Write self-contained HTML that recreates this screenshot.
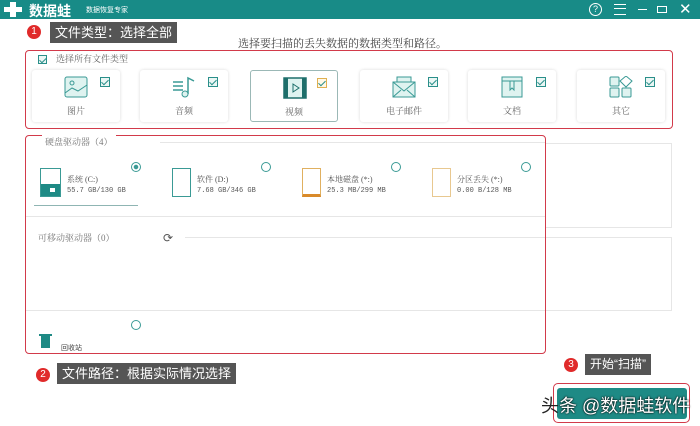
<!DOCTYPE html>
<html><head><meta charset="utf-8"><style>
*{margin:0;padding:0;box-sizing:border-box}
body{width:700px;height:426px;background:#fff;position:relative;overflow:hidden;font-family:"Liberation Sans","Noto Sans CJK SC",sans-serif;color:#555}
.a{position:absolute}
.serif{font-family:"Liberation Serif","Noto Serif CJK SC",serif}
.card{position:absolute;top:70px;width:88px;height:52px;background:#fff;border-radius:3px;box-shadow:0 0 3px rgba(0,0,0,.15)}
.card .lbl{position:absolute;top:34px;width:100%;text-align:center;font-size:9px;color:#666}
.cb{position:absolute;top:7px;right:10px;width:10px;height:10px;border:1px solid #2a8f8a;background:#eaf6f4}
.cb:after{content:"";position:absolute;left:2px;top:0px;width:3px;height:6px;border:solid #2a8f8a;border-width:0 1.5px 1.5px 0;transform:rotate(45deg)}
.card svg{position:absolute;left:32px;top:6px}
.red{border:1.5px solid #d23a4a;border-radius:4px}
.tag{background:#555;color:#fff;font-size:13px;line-height:21px;padding:0 5px}
.num{width:14px;height:14px;border-radius:50%;background:#e02a2a;color:#fff;font-size:10px;text-align:center;line-height:14px}
.radio{width:10px;height:10px;border:1px solid #3a9a95;border-radius:50%}
.dt{font-size:8px;color:#555}
</style></head><body>
<div class="a" style="left:0;top:0;width:700px;height:19px;background:#188b87"></div>
<div class="a" style="left:4px;top:2px;width:18px;height:15px">
<div class="a" style="left:6px;top:0;width:6px;height:15px;background:#fff"></div>
<div class="a" style="left:0;top:5px;width:18px;height:5px;background:#fff"></div></div>
<div class="a" style="left:29px;top:1px;color:#fff;font-size:14px;font-weight:bold">数据蛙</div>
<div class="a" style="left:86px;top:5px;color:#fff;font-size:7px">数据恢复专家</div>
<div class="a" style="left:589px;top:3px;width:13px;height:13px;border:1.5px solid #fff;border-radius:50%;color:#fff;font-size:9px;text-align:center;line-height:10px">?</div>
<div class="a" style="left:614px;top:4px;width:12px;height:11px;border-top:1.5px solid #fff;border-bottom:1.5px solid #fff"><div style="margin-top:3px;border-top:1.5px solid #fff"></div></div>
<div class="a" style="left:638px;top:9px;width:9px;border-top:1.5px solid #fff"></div>
<div class="a" style="left:657px;top:6px;width:10px;height:7px;border:1.5px solid #fff"></div>
<div class="a" style="left:679px;top:0px;color:#fff;font-size:15px">✕</div>

<div class="a num" style="left:27px;top:25px">1</div>
<div class="a tag" style="left:50px;top:22px">文件类型：选择全部</div>
<div class="a serif" style="left:238px;top:35px;font-size:11px;color:#444">选择要扫描的丢失数据的数据类型和路径。</div>

<div class="a red" style="left:25px;top:50px;width:648px;height:79px"></div>
<div class="cb" style="left:38px;top:55px;right:auto;width:9px;height:9px"></div>
<div class="a serif" style="left:56px;top:52px;font-size:9px;color:#666">选择所有文件类型</div>

<div class="card" style="left:32px"><svg width="24" height="22"><rect x="1" y="1" width="22" height="20" rx="2" fill="#dff3f0" stroke="#3a9a95"/><circle cx="8" cy="7" r="2" fill="none" stroke="#3a9a95"/><path d="M1 17 L8 12 L14 15 L23 9" fill="none" stroke="#3a9a95"/></svg><div class="cb"></div><div class="lbl serif">图片</div></div>
<div class="card" style="left:140px"><svg width="24" height="22"><path d="M1 6h10M1 10h10M1 14h10" stroke="#3a9a95" stroke-width="1.5"/><path d="M16 18V2l6 3" fill="none" stroke="#3a9a95" stroke-width="1.5"/><circle cx="13" cy="18" r="3" fill="#dff3f0" stroke="#3a9a95"/></svg><div class="cb"></div><div class="lbl serif">音频</div></div>
<div class="card" style="left:250px;border:1px solid #9bb8b6;box-shadow:none"><svg width="24" height="22"><rect x="1" y="1" width="22" height="20" fill="#dff3f0" stroke="#1e6f6b" stroke-width="1.5"/><rect x="1" y="1" width="4" height="20" fill="#1e6f6b"/><rect x="19" y="1" width="4" height="20" fill="#1e6f6b"/><path d="M10 7v8l6-4z" fill="none" stroke="#1e6f6b"/></svg><div class="cb" style="border-color:#e0b050;background:#fff8e6"></div><div class="lbl serif">视频</div></div>
<div class="card" style="left:360px"><svg width="24" height="22"><rect x="5" y="1" width="14" height="6" fill="#dff3f0" stroke="#3a9a95"/><rect x="1" y="6" width="22" height="15" fill="#dff3f0" stroke="#3a9a95"/><path d="M1 6l11 9 11-9M1 21l8-7M23 21l-8-7" fill="none" stroke="#3a9a95"/></svg><div class="cb"></div><div class="lbl serif">电子邮件</div></div>
<div class="card" style="left:468px"><svg width="24" height="22"><rect x="2" y="1" width="20" height="20" fill="#dff3f0" stroke="#3a9a95"/><path d="M2 5h20M10 5v9l2-2 2 2V5" fill="none" stroke="#3a9a95"/></svg><div class="cb"></div><div class="lbl serif">文档</div></div>
<div class="card" style="left:577px"><svg width="24" height="22"><rect x="1" y="1" width="9" height="9" rx="1" fill="#dff3f0" stroke="#3a9a95"/><path d="M17 0l6 5-6 6-6-6z" fill="#fff" stroke="#3a9a95"/><rect x="1" y="12" width="9" height="9" rx="1" fill="#dff3f0" stroke="#3a9a95"/><rect x="13" y="12" width="9" height="9" rx="1" fill="#dff3f0" stroke="#3a9a95"/></svg><div class="cb"></div><div class="lbl serif">其它</div></div>

<div class="a" style="left:545px;top:143px;width:127px;height:85px;border:1px solid #e6e6e6;border-left:none"></div>
<div class="a" style="left:545px;top:237px;width:127px;height:74px;border:1px solid #e6e6e6;border-left:none"></div>
<div class="a" style="left:160px;top:142px;width:385px;border-top:1px solid #e6e6e6"></div>
<div class="a" style="left:185px;top:237px;width:360px;border-top:1px solid #e6e6e6"></div>
<div class="a" style="left:25px;top:310px;width:520px;border-top:1px solid #e6e6e6"></div>
<div class="a" style="left:25px;top:216px;width:520px;border-top:1px solid #e6e6e6"></div>

<div class="a red" style="left:25px;top:135px;width:521px;height:219px"></div>
<div class="a serif" style="left:42px;top:135px;font-size:9px;color:#777;background:#fff;padding:0 3px">硬盘驱动器（4）</div>

<div class="a" style="left:40px;top:168px;width:21px;height:29px;border:1px solid #3a9a95"><div style="position:absolute;left:0;right:0;bottom:0;height:12px;background:#1e8a85"></div><div style="position:absolute;left:9px;bottom:4px;width:5px;height:4px;background:#fff"></div></div>
<div class="a dt serif" style="left:67px;top:174px">系统 (C:)</div>
<div class="a dt" style="left:67px;top:187px;font-family:'Liberation Mono',monospace;font-size:7px">55.7 GB/130 GB</div>
<div class="a radio" style="left:131px;top:162px;background:radial-gradient(#3a9a95 35%,#fff 45%)"></div>
<div class="a" style="left:34px;top:205px;width:104px;border-top:1px solid #8fb5b3"></div>

<div class="a" style="left:172px;top:168px;width:19px;height:29px;border:1px solid #3a9a95"></div>
<div class="a dt serif" style="left:197px;top:174px">软件 (D:)</div>
<div class="a dt" style="left:197px;top:187px;font-family:'Liberation Mono',monospace;font-size:7px">7.68 GB/346 GB</div>
<div class="a radio" style="left:261px;top:162px"></div>

<div class="a" style="left:302px;top:168px;width:19px;height:29px;border:1px solid #e0b060;border-bottom:3px solid #d98a2a"></div>
<div class="a dt serif" style="left:327px;top:174px">本地磁盘 (*:)</div>
<div class="a dt" style="left:327px;top:187px;font-family:'Liberation Mono',monospace;font-size:7px">25.3 MB/299 MB</div>
<div class="a radio" style="left:391px;top:162px"></div>

<div class="a" style="left:432px;top:168px;width:19px;height:29px;border:1px solid #e8c890"></div>
<div class="a dt serif" style="left:457px;top:174px">分区丢失 (*:)</div>
<div class="a dt" style="left:457px;top:187px;font-family:'Liberation Mono',monospace;font-size:7px">0.00  B/128 MB</div>
<div class="a radio" style="left:521px;top:162px"></div>

<div class="a serif" style="left:38px;top:231px;font-size:9px;color:#777">可移动驱动器（0）</div>
<div class="a" style="left:163px;top:231px;color:#555;font-size:12px">⟳</div>
<div class="a radio" style="left:131px;top:320px"></div>
<div class="a" style="left:41px;top:336px;width:9px;height:12px;background:#1e8a85;border-top:2px solid #1e8a85"></div>
<div class="a" style="left:39px;top:334px;width:13px;height:2px;background:#1e8a85"></div>
<div class="a" style="left:61px;top:343px;font-size:7px;color:#444">回收站</div>

<div class="a num" style="left:36px;top:368px">2</div>
<div class="a tag" style="left:57px;top:363px">文件路径：根据实际情况选择</div>
<div class="a num" style="left:564px;top:358px">3</div>
<div class="a tag" style="left:585px;top:354px;font-size:12px">开始“扫描”</div>

<div class="a red" style="left:553px;top:383px;width:137px;height:40px;border-radius:5px"></div>
<div class="a" style="left:557px;top:388px;width:130px;height:31px;background:#1e8a85;border-radius:3px"></div>
<div class="a" style="left:541px;top:392px;font-size:18px;color:#fff;text-shadow:0 0 2px #000,0 0 1px #000;white-space:nowrap"><span style="color:#222;text-shadow:none">头</span>条 @数据蛙软件</div>
</body></html>
